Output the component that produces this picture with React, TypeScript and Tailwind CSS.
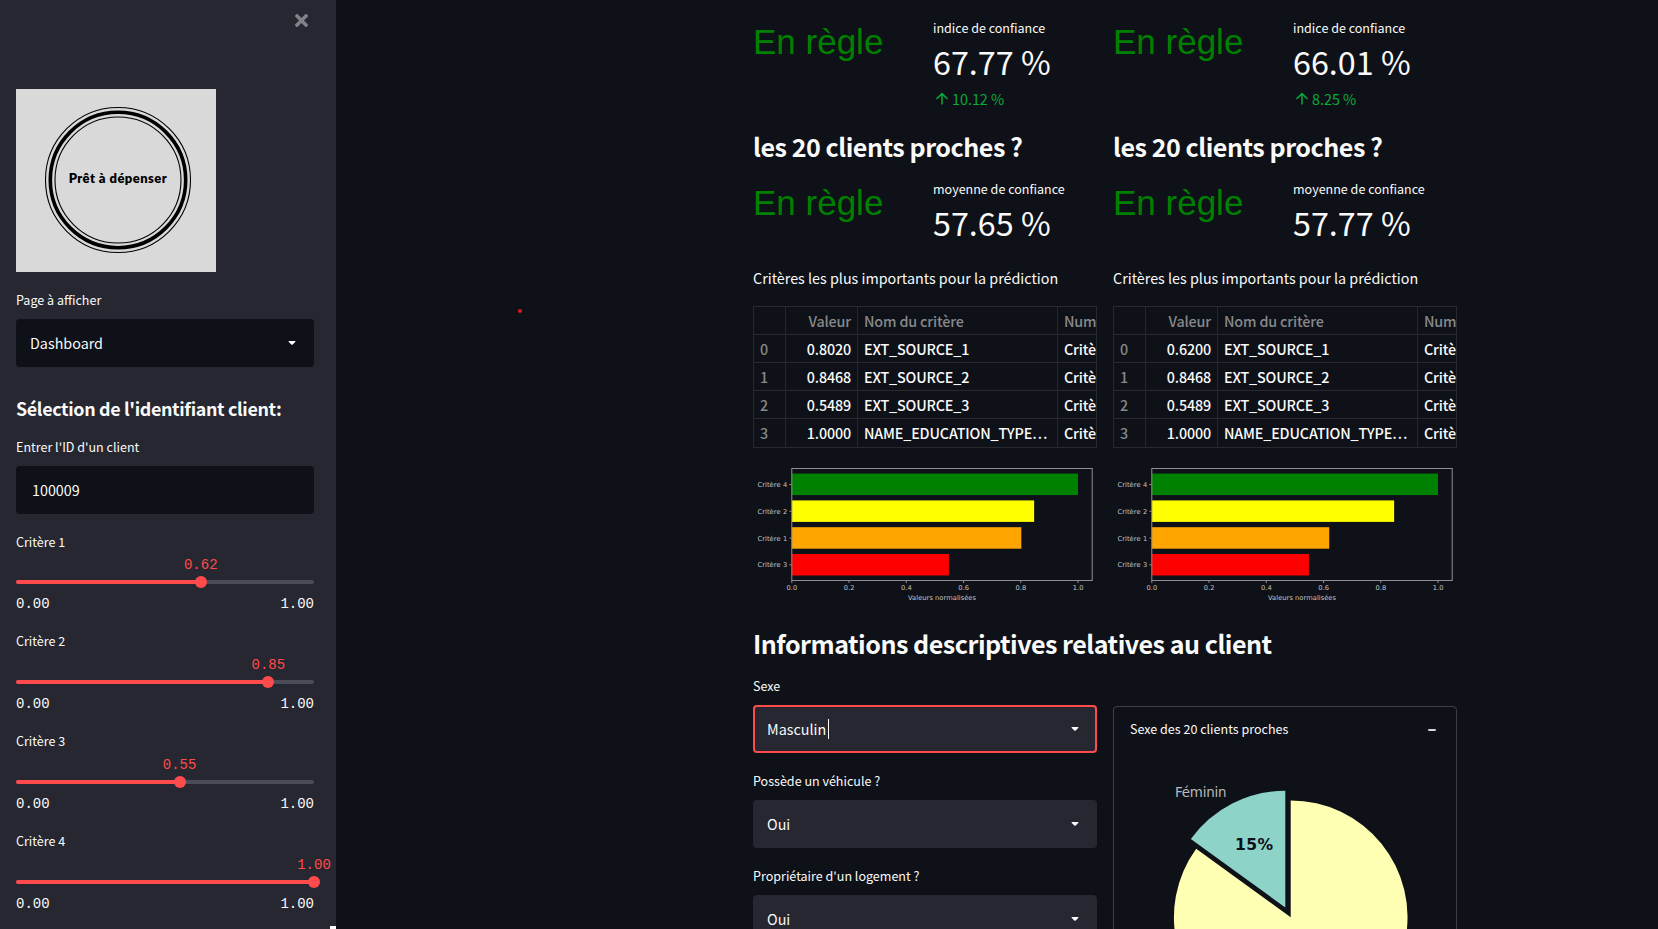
import { FaTimes } from "react-icons/fa";

const sans = "font-['Noto_Sans_CJK_SC','Noto_Sans',sans-serif]";
const mono = "font-['Liberation_Mono',monospace]";

function Caret() {
  return (
    <svg viewBox="0 0 20 20" className="size-5 fill-current">
      <path d="M7.2 8h5.6c.6 0 .8.6.4 1l-2.5 2.4c-.4.4-1 .4-1.4 0L6.8 9c-.4-.4-.2-1 .4-1Z" />
    </svg>
  );
}

function Label({ children }: { children: string }) {
  return <div className="h-[22px] text-[12.54px] leading-[21px]">{children}</div>;
}

function Select({ value, dark, focused }: { value: string; dark?: boolean; focused?: boolean }) {
  return (
    <div
      className={`flex h-12 items-center justify-between rounded-[4px] pr-3 pl-[14px] text-[14.33px] leading-6 ${
        dark ? "bg-[#0e1117]" : "bg-[#262730]"
      } ${focused ? "outline-2 -outline-offset-2 outline-[#ff4b4b]" : ""}`}
    >
      <div className="flex items-center gap-[2px]">
        <span>{value}</span>
        {focused && <span className="h-5 w-px bg-white" />}
      </div>
      <Caret />
    </div>
  );
}

function Slider({ label, value, raised }: { label: string; value: number; raised?: boolean }) {
  return (
    <div className="h-[100px]">
      <div className={raised ? "-translate-y-px" : ""}>
        <Label>{label}</Label>
      </div>
      <div className={`relative mt-[27px] h-1 rounded-full bg-[#4b4c57] ${mono} text-[14px]`}>
        <div className="h-1 rounded-full bg-[#ff4b4b]" style={{ width: `${value * 100}%` }} />
        <div className="absolute -top-1 size-3 -translate-x-1/2 rounded-full bg-[#ff4b4b]" style={{ left: `${value * 100}%` }} />
        <div className="absolute -top-[25px] -translate-x-1/2 leading-[21px] text-[#ff4b4b]" style={{ left: `${value * 100}%` }}>
          {value.toFixed(2)}
        </div>
      </div>
      <div className={`mt-[10px] flex justify-between text-[14px] leading-[21px] ${mono}`}>
        <span>0.00</span>
        <span>1.00</span>
      </div>
    </div>
  );
}

function Sidebar() {
  return (
    <aside className="relative h-full w-[336px] shrink-0 bg-[#262730] pr-[22px] pl-4">
      <div className="flex h-[89px] justify-end pt-[11px] pr-[3px] text-[#808189]">
        <FaTimes className="size-[19px]" />
      </div>
      <svg width="200" height="183" className="block bg-[#d9d9d9]">
        <g fill="none" stroke="#000">
          <circle cx="102" cy="91" r="72.5" strokeWidth="1.1" />
          <circle cx="102" cy="91" r="67.7" strokeWidth="3.6" />
          <circle cx="102" cy="91" r="63" strokeWidth="1.1" />
        </g>
        <text x="101.7" y="94.3" textAnchor="middle" textLength="98" className="font-['Lato',sans-serif] text-[13px] font-extrabold">
          Prêt à dépenser
        </text>
      </svg>
      <div className="pt-[17px]">
        <Label>Page à afficher</Label>
      </div>
      <div className="pt-[8px]">
        <Select value="Dashboard" dark />
      </div>
      <h2 className="mt-[29px] h-7 text-[17.9px] leading-6 font-bold tracking-[-0.35px] whitespace-nowrap">Sélection de l'identifiant client:</h2>
      <div className="mt-[12px]">
        <Label>Entrer l'ID d'un client</Label>
      </div>
      <div className="mt-[8px] flex h-12 items-center rounded-[4px] bg-[#0e1117] pl-4 text-[14.33px]">100009</div>
      <div className="mt-[17px]">
        <Slider label="Critère 1" value={0.62} />
        <Slider label="Critère 2" value={0.8468} raised />
        <Slider label="Critère 3" value={0.5489} raised />
        <Slider label="Critère 4" value={1} raised />
      </div>
      <div className="absolute right-0 bottom-0 h-[3px] w-[6px] bg-white" />
    </aside>
  );
}

function Status({ label, value, delta }: { label: string; value: string; delta?: string }) {
  return (
    <div className="grid grid-cols-2 gap-4">
      <div className="pt-[4px] font-['Liberation_Sans',Arial,sans-serif] text-[35px] leading-[42px] text-[#008000]">En règle</div>
      <div>
        <div className="h-[21px] text-[12.54px] leading-[21px] whitespace-nowrap">{label}</div>
        <div className="h-[49px] text-[32.3px] leading-[47px] whitespace-nowrap">{value}</div>
        {delta && (
          <div className="flex h-6 items-center text-[14.33px] leading-6 text-[#09ab3b]">
            <svg viewBox="0 0 18 18" className="mr-[1px] size-[18px]" fill="none" stroke="currentColor" strokeWidth="1.5">
              <path d="M9 14.5V4M3.5 9 9 3.6 14.5 9" />
            </svg>
            <span>{delta}</span>
          </div>
        )}
      </div>
    </div>
  );
}

const names = ["EXT_SOURCE_1", "EXT_SOURCE_2", "EXT_SOURCE_3", "NAME_EDUCATION_TYPE…"];

function DataTable({ values }: { values: string[] }) {
  const row = "grid grid-cols-[32px_72px_200px_38px] text-[14.33px]";
  const cell = "border-r border-[#262730] px-[6px] whitespace-nowrap";
  const lastCell = "pl-[6px] whitespace-nowrap";
  return (
    <div className="flex h-[142px] flex-col overflow-hidden border border-[#28292e] font-medium tracking-[-0.16px]">
      <div className={`${row} h-[27px] leading-[27px] text-[#86888b]`}>
        <div className={cell} />
        <div className={`${cell} text-right`}>Valeur</div>
        <div className={cell}>Nom du critère</div>
        <div className={lastCell}>Num</div>
      </div>
      {values.map((v, i) => (
        <div key={i} className={`${row} h-7 border-t border-[#28292e] leading-[28px] last:h-[29px]`}>
          <div className={`${cell} text-[#86888b]`}>{i}</div>
          <div className={`${cell} text-right`}>{v}</div>
          <div className={cell}>{names[i]}</div>
          <div className={lastCell}>Critè</div>
        </div>
      ))}
    </div>
  );
}

function BarChart({ first }: { first: number }) {
  const bars = [
    { name: "Critère 4", v: 1, color: "#008000" },
    { name: "Critère 2", v: 0.8468, color: "#ffff00" },
    { name: "Critère 1", v: first, color: "#ffa500" },
    { name: "Critère 3", v: 0.5489, color: "#ff0000" },
  ];
  return (
    <svg width="344" height="146" className="block font-['DejaVu_Sans',sans-serif] text-[6.7px]" fill="#c4c5c7">
      {bars.map((b, i) => (
        <g key={b.name}>
          <rect x="38.8" y={15.6 + i * 26.8} width={b.v * 286.2} height="21.5" fill={b.color} />
          <path d={`M36.3 ${26.5 + i * 26.8}h2.4`} stroke="#a9aaac" strokeWidth=".8" />
          <text x="34.2" y={28.9 + i * 26.8} textAnchor="end" textLength="29.8">{b.name}</text>
        </g>
      ))}
      <rect x="38.8" y="10.5" width="300.4" height="112" fill="none" stroke="#8f9092" />
      {[0, 1, 2, 3, 4, 5].map((t) => (
        <g key={t}>
          <path d={`M${38.8 + t * 57.24} 122.7v2.4`} stroke="#a9aaac" strokeWidth=".8" />
          <text x={38.9 + t * 57.24} y="132.1" textAnchor="middle">{(t / 5).toFixed(1)}</text>
        </g>
      ))}
      <text x="189" y="141.7" textAnchor="middle" textLength="68">Valeurs normalisées</text>
    </svg>
  );
}

interface ClientProps {
  confidence: string;
  delta: string;
  mean: string;
  values: string[];
  first: number;
}

function ClientColumn({ confidence, delta, mean, values, first }: ClientProps) {
  return (
    <section className="w-[344px]">
      <div className="h-[127px] pt-[17px]">
        <Status label="indice de confiance" value={confidence} delta={delta} />
      </div>
      <h3 className="h-[51px] text-[25.07px] leading-[38px] font-bold tracking-[-0.47px] whitespace-nowrap">les 20 clients proches ?</h3>
      <div className="h-[88px]">
        <Status label="moyenne de confiance" value={mean} />
      </div>
      <p className="h-[40px] text-[14.33px] leading-6">Critères les plus importants pour la prédiction</p>
      <DataTable values={values} />
      <div className="pt-[10px]">
        <BarChart first={first} />
      </div>
    </section>
  );
}

function Field({ label, value, focused }: { label: string; value: string; focused?: boolean }) {
  return (
    <div className="h-[95px]">
      <Label>{label}</Label>
      <div className="pt-[8px]">
        <Select value={value} focused={focused} />
      </div>
    </div>
  );
}

function PieCard() {
  return (
    <div className="mt-[31px] h-[400px] rounded-[4px] border border-[#3d3f44]">
      <div className="flex h-[46px] items-center justify-between pr-5 pl-4 text-[12.54px]">
        <span className="-mt-[2px]">Sexe des 20 clients proches</span>
        <span className="-mt-px h-[2px] w-2 rounded-full bg-[#d5d6d8]" />
      </div>
      <svg width="342" height="300" className="block font-['DejaVu_Sans',sans-serif]">
        <path d="M176.7 164.3V47.5A116.8 116.8 0 1 1 82.2 95.7Z" fill="#feffb3" />
        <path d="M171.3 154.5V37.7A116.8 116.8 0 0 0 76.8 85.9Z" fill="#8dd3c7" />
        <text x="61" y="44" textLength="51.5" className="text-[13.4px]" fill="#b9babc">Féminin</text>
        <text x="121" y="96.5" textLength="38" className="text-[15.6px] font-bold" fill="#0e1117">15%</text>
      </svg>
    </div>
  );
}

export default function App() {
  return (
    <div className={`flex h-[929px] w-[1658px] overflow-hidden bg-[#0e1117] text-[#fafafa] ${sans}`}>
      <Sidebar />
      <main className="relative h-full flex-1 pl-[417px]">
        <div className="absolute top-[309px] left-[181.5px] size-1 rounded-full bg-[#e0161b]" />
        <div className="flex gap-4">
          <ClientColumn confidence="67.77 %" delta="10.12 %" mean="57.65 %" first={0.802} values={["0.8020", "0.8468", "0.5489", "1.0000"]} />
          <ClientColumn confidence="66.01 %" delta="8.25 %" mean="57.77 %" first={0.62} values={["0.6200", "0.8468", "0.5489", "1.0000"]} />
        </div>
        <h3 className="h-[71px] pt-[20px] text-[25.07px] leading-[38px] font-bold tracking-[-0.49px]">Informations descriptives relatives au client</h3>
        <div className="flex gap-4">
          <div className="w-[344px]">
            <Field label="Sexe" value="Masculin" focused />
            <Field label="Possède un véhicule ?" value="Oui" />
            <Field label="Propriétaire d'un logement ?" value="Oui" />
          </div>
          <div className="w-[344px]">
            <PieCard />
          </div>
        </div>
      </main>
    </div>
  );
}
